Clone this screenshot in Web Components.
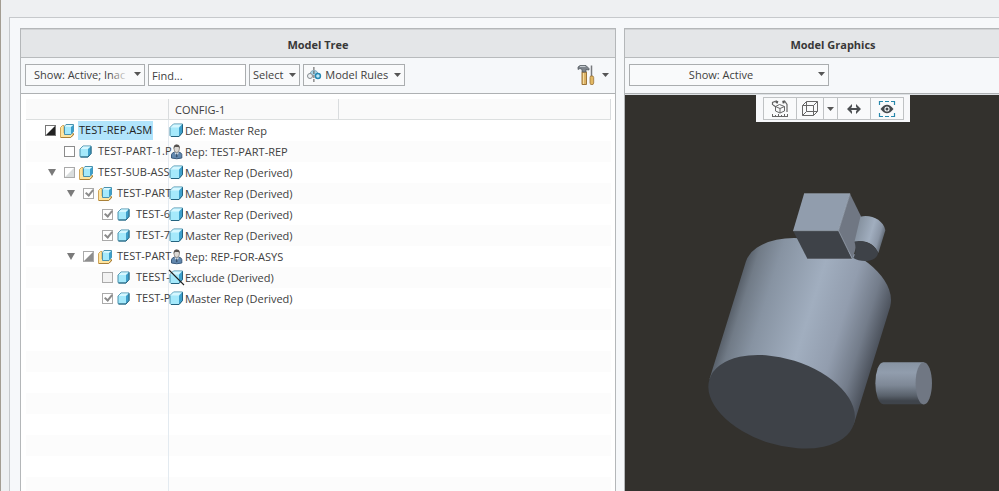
<!DOCTYPE html>
<html lang="en">
<head>
<meta charset="utf-8">
<title>Model Tree</title>
<style>
html,body{margin:0;height:100%;overflow:hidden}
body{font-family:"Open Sans","Noto Sans",sans-serif;font-size:11px;line-height:16px;color:#404040;background:#eef0f2}
app-window{height:100vh}
</style>
</head>
<body>
<app-window>
  <app-panel heading="Model Tree">
    <drop-select slot="tools" label="Show" value="Show: Active; Inac" style="--w:120px;--pad:8px" fade></drop-select>
    <find-box slot="tools"></find-box>
    <menu-button slot="tools">Select</menu-button>
    <menu-button slot="tools"><ui-icon slot="icon" name="rules"></ui-icon>Model Rules</menu-button>
    <settings-button slot="tools"></settings-button>
    <model-tree></model-tree>
  </app-panel>
  <app-panel heading="Model Graphics">
    <drop-select slot="tools" label="Show" value="Show: Active" style="--w:200px;--pad:8px;--end:24px;--align:center"></drop-select>
    <model-view></model-view>
  </app-panel>
</app-window>
<script>
const define = (name, html, setup) => customElements.define(name, class extends HTMLElement {
  connectedCallback() {
    if (this.shadowRoot) return;
    const root = this.attachShadow({ mode: 'open' });
    const t = document.createElement('template');
    t.innerHTML = html;
    root.append(t.content.cloneNode(true));
    if (setup) setup(this, root);
  }
});

const cube = '<path d="M1 4.5 4.5 1H13.5V9.5L10 13.5H2L1 12.5Z" fill="#a5e9fb" stroke="#4a91ad"/><path d="M1.5 4.5 4.5 1.5H13L10 4.5Z" fill="#d6f7ff"/><path d="M10 4.5 13 1.5V9.5L10 13Z" fill="#3d9fcb"/><path d="M2 13.5H10L13.5 9.5V1.5" fill="none" stroke="#24637f"/>';
const icons = {
  cube: [15, 15, cube],
  part: [13, 13, '<path d="M1 4 4 1H12V8.500L9 12H1.500L1 11Z" fill="#a5e9fb" stroke="#4a91ad"/><path d="M1.500 4 4 1.500H11.500L9 4Z" fill="#d6f7ff"/><path d="M9 4 11.800 1.500V8.500L9 11.500Z" fill="#3d9fcb"/><path d="M1.500 12H9L12 8.500V1.500" fill="none" stroke="#24637f"/>'],
  asm: [14, 14, '<path d="M.5 3.500 2.500 1.500H4V9H13V11L10.500 13.500H.5Z" fill="#ffe5a0" stroke="#d0a65a"/><path d="M1 13.500H10.500L13.500 11V9.500" fill="none" stroke="#a98038"/><path d="M4.500 2.500 6 .5H13.500V7.500L11 10.500H4.500Z" fill="#a5e9fb" stroke="#4a91ad"/><path d="M5 2.500 6 1H13L11 3Z" fill="#daf8ff"/><path d="M11 3 13.500 1V7.500L11 10Z" fill="#3d9fcb"/>'],
  user: [15, 15, '<path d="M2.500 14V10.500Q3 8.500 6 8H9.500Q12.500 8.500 12.800 10.500V14Q8 15.500 2.500 14Z" fill="#6288ae" stroke="#3b5b7c"/><path d="M5.500 8.500 7.700 12 10 8.500Z" fill="#e8edf2"/><path d="M7.200 9.500H8.300L8.600 12.500 7.700 13.500 6.900 12.500Z" fill="#38536f"/><ellipse cx="7.700" cy="4.800" rx="2.700" ry="3.700" fill="#dcd9d5" stroke="#77736f" stroke-width=".7"/><path d="M4.700 5Q4 .5 7.700.4 11.400.5 10.700 5L9.900 2.900Q7.500 3.300 5.700 2.800Z" fill="#55514e"/>'],
  excl: [15, 15, cube + '<path d="M0 0 15 15" stroke="#202020" stroke-width="1.100"/>'],
  rules: [14, 16, '<path d="M3 8Q3 3.500 7 3.500T11 8" fill="#a6d4e7" stroke="#87abbc"/><circle cx="3" cy="9" r="2.500" fill="#eef1f3" stroke="#858b90"/><circle cx="10.900" cy="9" r="2.500" fill="#bce9fa" stroke="#2587b2" stroke-width="1.500"/><path d="M6.900 0V16" stroke="#555" stroke-dasharray="3 1"/>'],
  tools: [18, 20, '<path d="M5 7H9.500V19.500H5Z" fill="#dcb366" stroke="#9c7439"/><path d="M6.500 8V19" stroke="#f6dda0"/><path d="M1 4.500V2L3 .5H9L12 3.500V5L9 4.500V7H5V4.500L3 3.500Z" fill="#7e858c" stroke="#4b5157" stroke-width=".7"/><path d="M3 1.500H8.500" stroke="#c4cacf"/><path d="M14.500.5V11" stroke="#77797c" stroke-width="1.500"/><path d="M13 12.500 13.500 11H16L16.700 12.500V18L16 19.500H13.700L13 18Z" fill="#e2b862" stroke="#9c7439" stroke-width=".8"/>'],
  measure: [18, 18, '<path d="M4.500 6.500 9 8.500 13.500 6.500V11L9 13 4.500 11ZM9 8.500V13M4.500 6.500 8.500 4.500 13.500 6.500" fill="none" stroke="#666"/><path d="M1.500 5V2.500L4 1.500 6.500 3M16 12V4.500L14 1.500 11.500 3M2 5 5 7" fill="none" stroke="#666" stroke-width="1.200"/><path d="M4.500 0 7.500 1.500 6 4ZM11 1 14 .3 13 4Z" fill="#555"/><path d="M1 16.500H17M1.500 16V14M4.500 16V15M7.500 16V14M10.500 16V15M13.500 16V14M16.500 16V14" stroke="#666"/>'],
  wire: [16, 16, '<path d="M.5 4.500H11.500V14.500H.5ZM4.500.5H15.500V10.500H4.500ZM.5 4.500 4.500.5M11.500 4.500 15.500.5M.5 14.500 4.500 10.500M11.500 14.500 15.500 10.500" fill="none" stroke="#666"/>'],
  arrows: [16, 16, '<path d="M3 8H13" stroke="#4c4f52" stroke-width="2"/><path d="M1 8 6 3V5.500L4.500 8 6 10.500V13ZM15 8 10 3V5.500L11.500 8 10 10.500V13Z" fill="#4c4f52"/>'],
  eye: [16, 16, '<path d="M.5 4V.5H4M6 .5H10M12 .5H15.500V4M.5 12V15.500H4M6 15.500H10M12 15.500H15.500V12" fill="none" stroke="#2788ac" stroke-width="1.200"/><path d="M1.500 8Q8-.5 14.500 8 8 16.500 1.500 8Z" fill="#44484c"/><circle cx="8" cy="8" r="2.600" fill="#f8f9fa"/><circle cx="8" cy="8" r="1.500" fill="#44484c"/>'],
  down: [7, 4, '<path d="M0 0H7L3.500 4Z" fill="#555"/>'],
  open: [8, 7, '<path d="M0 0H8L4 7Z" fill="#7a7a7a"/>']
};

define('ui-icon', '<style>:host{display:inline-block;flex:none;line-height:0}svg{display:block;overflow:visible}</style>', (el, root) => {
  const [w, h, body] = icons[el.getAttribute('name')];
  root.innerHTML += `<svg aria-hidden="true" width="${w}" height="${h}" viewBox="0 0 ${w} ${h}">${body}</svg>`;
});

define('app-window', `<style>
:host{display:block;box-sizing:border-box;height:100%;padding:17px 0 0 8px;border-left:1px solid #a39d92;overflow:hidden}
div{box-sizing:border-box;width:calc(100% + 45px);height:100%;border:1px solid #c6c9cc;border-width:1px 0 0 1px;background:#f6f8fa;padding:10px 2px 0 10px;display:grid;grid-template-columns:596fr 418fr;gap:8px}
</style><div><slot></slot></div>`);

define('app-panel', `<style>
:host{display:flex;flex-direction:column;min-width:0;min-height:0;box-sizing:border-box;border:1px solid #b4b7b9;border-bottom:0}
h2{margin:0;height:29px;box-sizing:border-box;border-bottom:1px solid #b8bbbd;border-top:1px solid #d0d2d4;background:#e4e6e8;font-size:11px;line-height:30px;text-align:center;color:#383838}
.tools{display:flex;align-items:center;gap:3px;height:34px;padding:0 6px 1px 4px;border-bottom:1px solid #aeb1b3}
.body{flex:1;min-height:0;display:grid}
</style><h2></h2><div class="tools"><slot name="tools"></slot></div><div class="body"><slot></slot></div>`,
(el, root) => { root.querySelector('h2').textContent = el.getAttribute('heading'); });

define('drop-select', `<style>
:host{display:block;position:relative;width:var(--w);height:22px}
select{appearance:none;box-sizing:border-box;width:100%;height:100%;margin:0;padding:0 var(--end,12px) 0 var(--pad);font:inherit;color:inherit;background:#f9fafb;border:1px solid #aaadaf;border-radius:0;text-align:var(--align,left);text-align-last:var(--align,left)}
ui-icon{position:absolute;right:4px;top:8px;pointer-events:none}
:host([fade])::after{content:"";position:absolute;right:16px;top:2px;bottom:2px;width:20px;background:linear-gradient(90deg,#f9fafb00,#f9fafb);pointer-events:none}
</style><select><option></option></select><ui-icon name="down"></ui-icon>`, (el, root) => {
  root.querySelector('select').setAttribute('aria-label', el.getAttribute('label'));
  root.querySelector('option').textContent = el.getAttribute('value');
});

define('find-box', `<style>
:host{display:block;width:98px;height:22px}
input{box-sizing:border-box;width:100%;height:100%;padding:0 3px;font:inherit;color:inherit;background:#fff;border:1px solid #aaadaf;border-radius:0}
</style><input type="text" aria-label="Find" value="Find...">`);

define('menu-button', `<style>
:host{display:block;height:22px}
button{display:flex;align-items:center;gap:4px;box-sizing:border-box;height:100%;padding:0 3px;font:inherit;color:inherit;background:#f9fafb;border:1px solid #aaadaf;white-space:nowrap}
ui-icon{margin-left:2px}
</style><button type="button"><slot name="icon"></slot><span><slot></slot></span><ui-icon name="down"></ui-icon></button>`);

define('settings-button', `<style>
:host{display:block;margin-left:auto}
button{display:flex;align-items:center;gap:7px;padding:0;background:none;border:0}
</style><button type="button" aria-label="Settings"><ui-icon name="tools"></ui-icon><ui-icon name="down"></ui-icon></button>`);

const rows = [
  [0, '', 'mixed dark', 'asm', 'TEST-REP.ASM', 'cube', 'Def: Master Rep'],
  [1, '', '', 'part', 'TEST-PART-1.P', 'user', 'Rep: TEST-PART-REP'],
  [1, 'open', 'mixed pale', 'asm', 'TEST-SUB-ASS', 'cube', 'Master Rep (Derived)'],
  [2, 'open', 'on', 'asm', 'TEST-PART', 'cube', 'Master Rep (Derived)'],
  [3, '', 'on', 'part', 'TEST-6', 'cube', 'Master Rep (Derived)'],
  [3, '', 'on', 'part', 'TEST-7', 'cube', 'Master Rep (Derived)'],
  [2, 'open', 'mixed', 'asm', 'TEST-PART', 'user', 'Rep: REP-FOR-ASYS'],
  [3, '', 'grey', 'part', 'TEEST-', 'excl', 'Exclude (Derived)'],
  [3, '', 'on', 'part', 'TEST-P', 'cube', 'Master Rep (Derived)']
];

define('model-tree', `<style>
:host{display:block;min-width:0;overflow:hidden;background:#fff;padding:5px 4px 0 5px}
.sheet{height:100%;background:linear-gradient(#e3eaf0,#e3eaf0) 142px 0/1px 100% no-repeat,repeating-linear-gradient(#fff 0 21px,#fcfcfc 21px 42px) 0 21px}
table{width:100%;table-layout:fixed;border-collapse:separate;border-spacing:0}
col.a{width:143px}col.b{width:170px}
th{box-sizing:border-box;height:21px;padding:2px 0 0 6px;font-weight:400;text-align:left;background:#fafafa;border-bottom:1px solid #dcdfdf;border-right:1px solid #d9dcde}
td{height:21px;padding:0}
.n,.c{display:flex;align-items:center;height:21px;white-space:nowrap;min-width:0}
.n{margin-right:1px;padding-left:calc(var(--d)*19px)}
.c{gap:1px}
.t{display:flex;width:19px;height:16px;padding:0 6px 0 0;border:0;background:none;align-items:center;box-sizing:border-box;flex:none;justify-content:center}
input{appearance:none;flex:none;box-sizing:border-box;width:11px;height:11px;margin:0 4px 0 0;border:1px solid #8c8c8c;background:#fff}
input.mixed{background:linear-gradient(135deg,#fff 48%,#8e8e8e 52%);border-color:#aaa}
input.dark{background:linear-gradient(135deg,#fff 48%,#222 52%);border-color:#777}
input.pale{background:linear-gradient(135deg,#fff 48%,#d9dddd 52%)}
input.grey{background:#f2f2f2;border-color:#aaa}
input.on{background:#fff;border-color:#aaa;position:relative}
input.on::after{content:"";position:absolute;left:3px;top:-1px;width:3px;height:6px;border:solid #8c8c8c;border-width:0 2px 2px 0;rotate:40deg}
.i{width:14px;margin-right:4px}
label{padding:1px 1px 2px}
.hot label{background:#b1e4fb;color:#222}
</style><div class="sheet"><table><colgroup><col class="a"><col class="b"><col></colgroup>
<thead><tr><th></th><th>CONFIG-1</th><th></th></tr></thead><tbody></tbody></table></div>`, (el, root) => {
  root.querySelector('tbody').innerHTML = rows.map(([d, open, state, icon, name, ci, text], i) => `<tr class="${i ? '' : 'hot'}">
<td><div class="n" style="--d:${d}">${open ? `<button class="t" type="button" aria-label="Collapse ${name}"><ui-icon name="open"></ui-icon></button>` : '<span class="t"></span>'}<input type="checkbox" id="r${i}" class="${state}"${state === 'on' ? ' checked' : ''}><ui-icon class="i" name="${icon}"></ui-icon><label for="r${i}">${name}</label></div></td>
<td><div class="c"><ui-icon name="${ci}"></ui-icon>${text}</div></td><td></td></tr>`).join('');
  root.querySelectorAll('.mixed').forEach(b => { b.indeterminate = true; });
});

define('model-view', `<style>
:host{display:block;position:relative;overflow:hidden;background:#33312d;min-width:0;border-top:1px solid #dde1e4}
svg.scene{display:block;width:100%;height:397px}
nav{position:absolute;top:0;left:50%;translate:-50% 0;display:flex;padding:2px 7px;background:#f7f8fa}
button{box-sizing:border-box;width:34px;height:23px;padding:0;margin:0 -1px 0 0;border:1px solid #bfc2c4;background:#f9fafb;display:flex;align-items:center;justify-content:center}
button.wire{width:28px;border-right-color:#d8dadc}
button.more{width:15px}
</style>
<svg class="scene" viewBox="625 94 417 397" role="img" aria-label="Assembly preview">
<defs>
<linearGradient id="big" gradientUnits="userSpaceOnUse" x1="709.700" y1="378.300" x2="854.300" y2="423.700"><stop offset="0" stop-color="#59616b"/><stop offset=".06" stop-color="#717b87"/><stop offset=".2" stop-color="#8793a2"/><stop offset=".5" stop-color="#a1aebf"/><stop offset=".72" stop-color="#929dae"/><stop offset=".88" stop-color="#737c8a"/><stop offset="1" stop-color="#4b515b"/></linearGradient>
<linearGradient id="mini" gradientUnits="userSpaceOnUse" x1="857" y1="232" x2="884" y2="240"><stop offset="0" stop-color="#8793a1"/><stop offset=".5" stop-color="#a1aebf"/><stop offset=".8" stop-color="#8a95a5"/><stop offset="1" stop-color="#59616b"/></linearGradient>
<linearGradient id="side" x1="0" y1="0" x2="0" y2="1"><stop offset="0" stop-color="#8793a2"/><stop offset=".25" stop-color="#919dad"/><stop offset=".55" stop-color="#7e8896"/><stop offset=".8" stop-color="#59616b"/><stop offset=".92" stop-color="#3f444b"/></linearGradient>
</defs>
<path fill="url(#big)" d="M709.700 378.300 746.200 260.300A75.800 43.100 17.400 0 1 890.800 305.700L854.300 423.700Z"/>
<ellipse cx="782" cy="401" rx="75.800" ry="43.100" transform="rotate(17.400 782 401)" fill="#3e4248"/>
<path fill="#919dad" d="M804.500 192.500H850.500L839 229.500H793.500Z"/>
<path fill="#3e4248" d="M793.500 229.500H839L853 258H808Z"/>
<path fill="#707783" d="M850.500 192.500 864.500 221 853 258 839 229.500Z"/>
<path fill="none" stroke="#a2adbb" stroke-width=".7" d="M804.500 192.500H850.500L839 229.500H793.500M839 229.500 853 258H808"/>
<path fill="url(#mini)" d="M861 215.500C872 213 884 219 886 229L879 252C875 242 865 238 855 241Z"/>
<path fill="#3e4248" d="M855 240.500C865 238 876 244 878.700 252 878 257 872 260 866 260 861 260 857 259 853.800 257 856 253 857 247 855 240.500Z"/>
<path fill="url(#side)" d="M884 361.300H924.500V403.500H884A8 21 0 0 1 884 361.300Z"/>
<ellipse cx="924.500" cy="382.500" rx="8.200" ry="21.200" fill="#707783"/>
</svg>
<nav aria-label="View"><button type="button" aria-label="Refit"><ui-icon name="measure"></ui-icon></button><button class="wire" type="button" aria-label="Display style"><ui-icon name="wire"></ui-icon></button><button class="more" type="button" aria-label="More styles"><ui-icon name="down"></ui-icon></button><button type="button" aria-label="Width"><ui-icon name="arrows"></ui-icon></button><button type="button" aria-label="Visibility"><ui-icon name="eye"></ui-icon></button></nav>`);
</script>
</body>
</html>
